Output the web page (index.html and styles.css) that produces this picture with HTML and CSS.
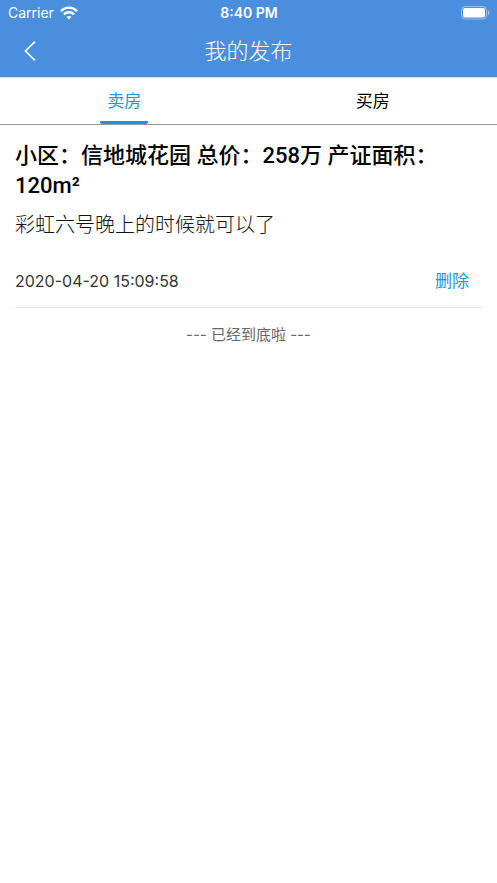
FILE: index.html
```html
<!DOCTYPE html>
<html lang="zh-CN">
<head>
<meta charset="utf-8">
<meta name="viewport" content="width=device-width, initial-scale=1">
<title>我的发布</title>
<link rel="stylesheet" href="styles.css">
</head>
<body>
<header class="top">
  <div class="status">
    <div class="carrier"><span>Carrier</span>
      <svg width="18" height="14" viewBox="0 0 18 14" fill="none" stroke="#fff" stroke-width="2.4"><path d="M.9 5.100C5.400.5 12.600.5 17.100 5.100M3.900 8.300c2.900-2.800 7.300-2.800 10.200 0"/><path d="M9 13.400 6.500 10.900c1.400-1.300 3.600-1.300 5 0z" fill="#fff" stroke="none"/></svg>
    </div>
    <span class="clock">8:40 PM</span>
    <svg class="battery" width="29" height="14" viewBox="0 0 29 14"><rect x=".5" y=".5" width="25" height="12.500" rx="3.500" fill="none" stroke="#fff" stroke-opacity=".45"/><rect x="2" y="2" width="22" height="9.500" rx="2" fill="#fff"/><path d="M27 4.500c2 .7 2 3.600 0 4.300z" fill="#fff" fill-opacity=".5"/></svg>
  </div>
  <div class="nav">
    <button class="back" type="button" aria-label="返回"><svg width="12" height="20" viewBox="0 0 12 20" fill="none" stroke="#fff" stroke-width="1.600"><path d="M11 .6 1.400 10 11 19.400"/></svg></button>
    <h1 class="title">我的发布</h1>
  </div>
</header>
<nav class="tabs">
  <button class="tab active" type="button"><span>卖房</span></button>
  <button class="tab" type="button"><span>买房</span></button>
</nav>
<main class="list">
  <article class="post">
    <h2 class="heading">小区：信地城花园 总价：258万 产证面积：120m²</h2>
    <p class="desc">彩虹六号晚上的时候就可以了</p>
    <div class="meta"><time datetime="2020-04-20T15:09:58">2020-04-20 15:09:58</time><button class="delete" type="button">删除</button></div>
  </article>
  <p class="end">--- 已经到底啦 ---</p>
</main>
</body>
</html>
```

FILE: styles.css
```css
* { box-sizing: border-box; }
body {
  margin: 0;
  background: #fff;
  color: #000;
  font-family: Inter, "Noto Sans CJK SC", sans-serif;
}
h1, h2, p { margin: 0; }
button {
  padding: 0;
  border: 0;
  background: none;
  color: inherit;
  font: inherit;
}
svg { display: block; }
.top { background: #4a8ede; color: #fff; }
.status {
  display: grid;
  grid-template-columns: 1fr auto 1fr;
  align-items: center;
  height: 25px;
  padding: 0 7px 0 8px;
  font-size: 14px;
}
.carrier { display: flex; align-items: center; gap: 6px; }
.clock { font-weight: 600; }
.battery { justify-self: end; }
.nav {
  display: grid;
  grid-template-columns: 60px 1fr 60px;
  align-items: center;
  height: 52px;
}
.back { display: grid; place-items: center; height: 48px; }
.title {
  text-align: center;
  font-size: 22px;
  font-weight: 300;
  line-height: 30px;
}
.tabs {
  display: grid;
  grid-template-columns: 1fr 1fr;
  height: 48px;
  border-top: 1px solid #d5e2f4;
  border-bottom: 1px solid #999;
}
.tab { font-size: 17px; line-height: 46px; }
.tab span { display: inline-block; padding: 0 7px; height: 46px; }
.active { color: #1a98db; }
.active span {
  background: linear-gradient(#1a94dc, #1a94dc) bottom / 100% 3px no-repeat;
  border-radius: 2px;
}
.list { padding: 0 15px; }
.post { padding-top: 16px; border-bottom: 1px solid #e8e8e8; }
.heading {
  font-family: Roboto, "Noto Sans CJK SC", sans-serif;
  font-size: 22px;
  font-weight: 500;
  line-height: 30px;
}
.desc { padding-top: 9px; font-size: 20px; font-weight: 300; line-height: 30px; color: #111; }
.meta {
  display: flex;
  align-items: center;
  justify-content: space-between;
  padding: 29px 13px 14px 0;
  font-size: 16px;
  line-height: 24px;
  color: #333;
}
.delete { font-size: 17px; color: #1a98db; }
.end {
  padding-top: 16px;
  text-align: center;
  font-size: 15px;
  line-height: 22px;
  color: #666;
}
```
